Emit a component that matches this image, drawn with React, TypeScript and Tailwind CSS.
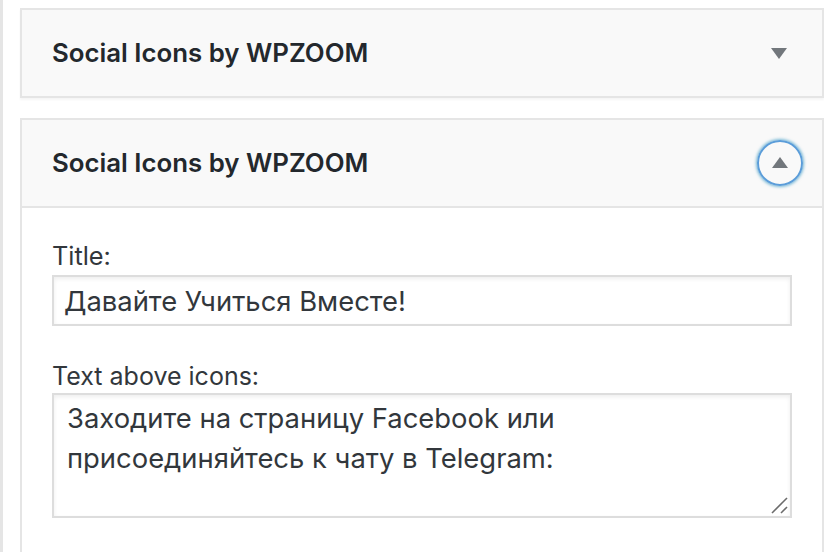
import React from "react";

function Triangle({ up }: { up?: boolean }) {
  return (
    <svg width="16" height="11" viewBox="0 0 16 11" className="block">
      {up ? (
        <polygon points="8,0 16,11 0,11" fill="#72777c" />
      ) : (
        <polygon points="0,0 16,0 8,11" fill="#72777c" />
      )}
    </svg>
  );
}

export default function App() {
  return (
    <div className="w-[824px] h-[552px] overflow-hidden bg-white flex font-['Inter',sans-serif]">
      <div className="w-[3px] shrink-0 bg-[#e5e5e5]" />
      <div className="flex-1 pl-[17px] pt-[8px] flex flex-col">
        {/* Card 1 (collapsed) */}
        <div className="h-[90px] border-2 border-[#e5e5e5] bg-[#f9f9f9] shadow-[0_2px_2px_rgba(0,0,0,0.04)] flex items-center justify-between pl-[30px] pr-[20px]">
          <h3 className="text-[25.8px] font-semibold text-[#23282d] leading-none">
            Social Icons by WPZOOM
          </h3>
          <div className="w-[46px] h-[46px] flex items-center justify-center">
            <Triangle />
          </div>
        </div>

        {/* Card 2 (expanded) */}
        <div className="mt-[20px] flex-1 border-2 border-b-0 border-[#e5e5e5] flex flex-col">
          <div className="h-[88px] border-b-2 border-[#e5e5e5] bg-[#f9f9f9] flex items-center justify-between pl-[30px] pr-[19px]">
            <h3 className="text-[25.8px] font-semibold text-[#23282d] leading-none">
              Social Icons by WPZOOM
            </h3>
            <div className="w-[46px] h-[46px] rounded-full border-2 border-[#5b9dd9] shadow-[0_0_3px_1px_rgba(30,140,190,0.6)] flex items-center justify-center pb-[2px]">
              <Triangle up />
            </div>
          </div>
          <div className="flex-1 bg-white pl-[30px] pr-[30px] pt-[34px] flex flex-col">
            <label className="block text-[25.3px] leading-[28px] text-[#32373c]">
              Title:
            </label>
            <input
              readOnly
              value="Давайте Учиться Вместе!"
              className="mt-[5px] w-[740px] h-[51px] border-2 border-[#dddddd] shadow-[inset_0_2px_4px_rgba(0,0,0,0.07)] px-[10px] text-[27.4px] text-[#32373c] bg-white outline-none font-['Inter',sans-serif]"
            />
            <label className="block mt-[36px] text-[25px] leading-[28px] text-[#32373c]">
              Text above icons:
            </label>
            <div className="relative mt-[3px] w-[740px] h-[125px]">
              <textarea
                readOnly
                value={"Заходите на страницу Facebook или присоединяйтесь к чату в Telegram:"}
                className="block w-full h-full border-2 border-[#dddddd] shadow-[inset_0_2px_4px_rgba(0,0,0,0.07)] pl-[13px] pr-[12px] pt-[3px] text-[27.4px] leading-[40px] text-[#32373c] bg-white outline-none resize-none font-['Inter',sans-serif]"
              />
              <svg
                width="18"
                height="18"
                viewBox="0 0 18 18"
                className="absolute right-[3px] bottom-[3px] pointer-events-none"
              >
                <line x1="1" y1="16" x2="16" y2="1" stroke="#6b6b6b" strokeWidth="1.6" />
                <line x1="10" y1="16" x2="16" y2="10" stroke="#6b6b6b" strokeWidth="1.6" />
              </svg>
            </div>
          </div>
        </div>
      </div>
    </div>
  );
}
